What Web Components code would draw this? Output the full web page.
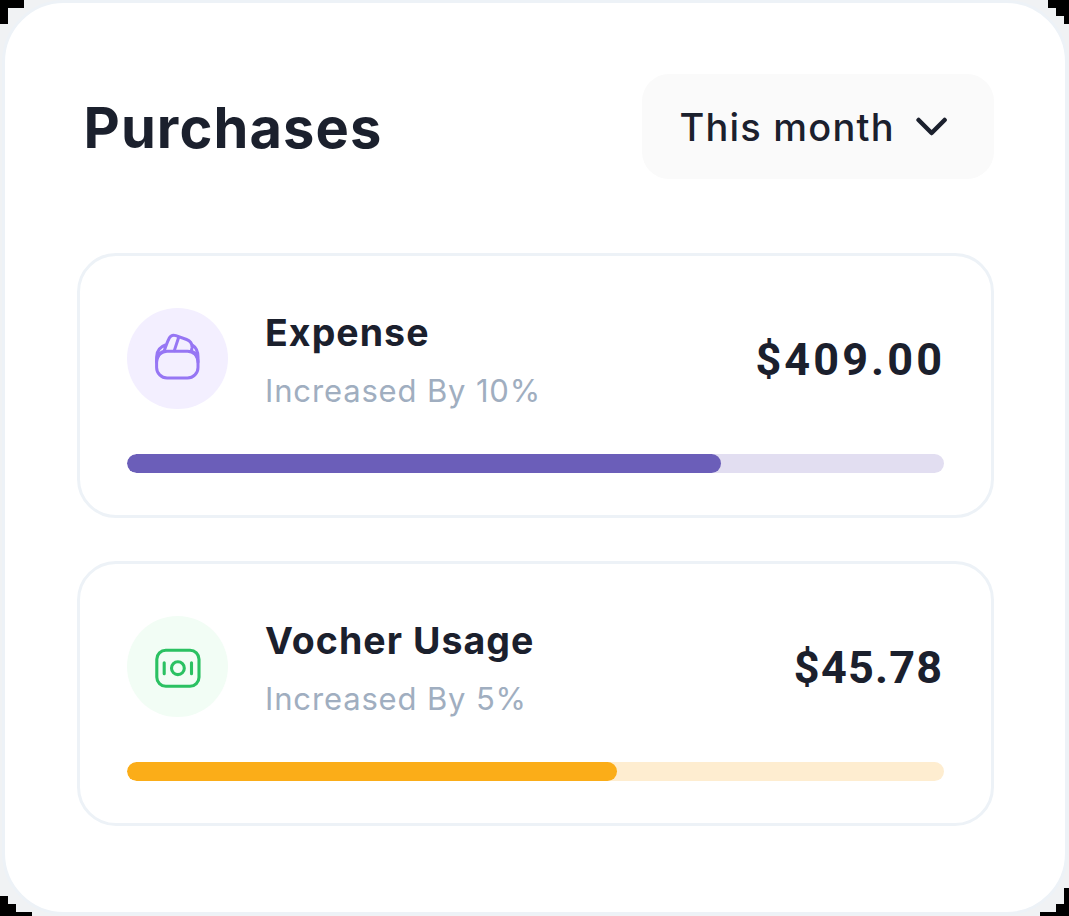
<!DOCTYPE html>
<html lang="en">
<head>
<meta charset="utf-8">
<title>Purchases</title>
<style>
html,body{margin:0;height:100%;overflow:hidden;background:#f0f2f4}
body{font-family:Inter,"Liberation Sans",sans-serif;color:#1b202d}
</style>
</head>
<body>
<purchases-card>
  <period-select slot="action">This month</period-select>
  <usage-card style="--tint:#f3efff;--bar:#6b5eb9;--track:#e2def1;--amount-spacing:3.1px" value="594">
    <svg slot="icon" width="52" height="52" viewBox="1 0 52 52" fill="none" stroke="#9676f4" stroke-width="3" stroke-linejoin="round" stroke-linecap="round">
      <rect x="5.6" y="18.2" width="41.4" height="26.8" rx="10.5"/>
      <path d="M5.6 29v-5c0-6.3 3-10.2 9.4-12.3M47 29v-5c0-5.6-1.8-9.8-6-12.3M6.5 25c1-3.8 3.4-6.3 7.3-6.8M46.2 25c-.9-3.8-3-6.3-6.2-6.8M13.3 17.5c1.6-4.2 2.8-8.5 5-12.4 1.4-2.6 3.6-3.4 6.6-2.5l10.7 3.9c3.9 1.5 5.8 4.5 5.4 8.5l-.7 2.8M27.7 4.2l-4.4 13.4"/>
    </svg>
    <span slot="name">Expense</span><span slot="note">Increased By 10%</span><span slot="amount">$409.00</span>
  </usage-card>
  <usage-card style="--tint:#f2fdf5;--bar:#fbad18;--track:#feedd0;--amount-spacing:1.2px" value="490">
    <svg slot="icon" width="52" height="52" viewBox="1 0 52 52" fill="none" stroke="#2bc162" stroke-width="3.1" stroke-linecap="round">
      <rect x="5.8" y="9.3" width="42.2" height="35.9" rx="9"/>
      <circle cx="26.9" cy="27.2" r="6.4"/><path d="M13.2 21.7v11M40.5 21.7v11"/>
    </svg>
    <span slot="name">Vocher Usage</span><span slot="note">Increased By 5%</span><span slot="amount">$45.78</span>
  </usage-card>
</purchases-card>
<script>
customElements.define('purchases-card', class extends HTMLElement {
  constructor(){
    super();
    this.attachShadow({mode:'open'}).innerHTML = `
<style>
:host{display:block;position:relative;width:1069px;height:916px;box-sizing:border-box;padding:0 1px 1px 2px}
.panel{box-sizing:border-box;height:915px;border:3px solid #edf2f7;border-radius:62px;background:#fff;padding:70.5px 71px 0 72px}
header{display:flex;justify-content:space-between;align-items:center;height:105.5px;margin-bottom:74px}
h1{margin:3px 0 0 6.5px;font-size:56px;line-height:70px;font-weight:700;letter-spacing:1.1px;white-space:nowrap}
.list{display:flex;flex-direction:column;gap:43px}
.corners{position:absolute;inset:0;width:1069px;height:916px;pointer-events:none}
</style>
<div class="panel"><header><h1>Purchases</h1><slot name="action"></slot></header><div class="list"><slot></slot></div></div>
<svg class="corners" viewBox="0 0 1069 916" shape-rendering="crispEdges"><path d="M0 0H24V8H8V24H0ZM1048 0H1069V24H1064V16H1056V8H1048ZM0 896H8V904H16V912H32V916H0ZM1040 916V912H1056V904H1064V888H1069V916Z"/></svg>`;
  }
});
customElements.define('period-select', class extends HTMLElement {
  constructor(){
    super();
    this.attachShadow({mode:'open'}).innerHTML = `
<style>
:host{display:flex;box-sizing:border-box;width:352px;height:105.5px;border-radius:27px;background:#fafafa;align-items:center;justify-content:space-between;padding:1px 46.5px 0 37.5px;font-size:38px;font-weight:500;line-height:50px;letter-spacing:1.2px;white-space:nowrap}
svg{display:block}
</style>
<span><slot></slot></span>
<svg width="32" height="20" viewBox="0 0 32 20" fill="none" stroke="#1b202d" stroke-width="4.5" stroke-linecap="round" stroke-linejoin="round"><path d="M2.6 3 15.6 16 28.6 3"/></svg>`;
  }
});
customElements.define('usage-card', class extends HTMLElement {
  constructor(){
    super();
    this.attachShadow({mode:'open'}).innerHTML = `
<style>
:host{display:block;box-sizing:border-box;height:265px;border:3px solid #edf2f7;border-radius:39px;padding:52px 47px 0}
.row{display:flex;height:101px;align-items:center}
.icon{display:grid;place-items:center;width:101px;height:101px;border-radius:50%;background:var(--tint);flex:none}
.text{margin-left:37px;padding-top:2px;display:flex;flex-direction:column;white-space:nowrap}
.name{font-size:37.5px;line-height:48px;font-weight:700;letter-spacing:1.05px}
.note{font-size:31px;line-height:40px;color:#a0aec0;margin-top:14px;letter-spacing:.85px}
.amount{margin:3px calc(2px - var(--amount-spacing)) 0 auto;font-family:Roboto,Inter,sans-serif;font-size:45px;line-height:56px;font-weight:700;letter-spacing:var(--amount-spacing)}
.track{margin-top:45px;height:19px;border-radius:10px;background:var(--track);overflow:hidden}
.fill{height:100%;border-radius:10px;background:var(--bar)}
</style>
<div class="row"><div class="icon"><slot name="icon"></slot></div>
<div class="text"><div class="name"><slot name="name"></slot></div><div class="note"><slot name="note"></slot></div></div>
<div class="amount"><slot name="amount"></slot></div></div>
<div class="track"><div class="fill"></div></div>`;
  }
  connectedCallback(){
    this.shadowRoot.querySelector('.fill').style.width = this.getAttribute('value') + 'px';
  }
});
</script>
</body>
</html>
